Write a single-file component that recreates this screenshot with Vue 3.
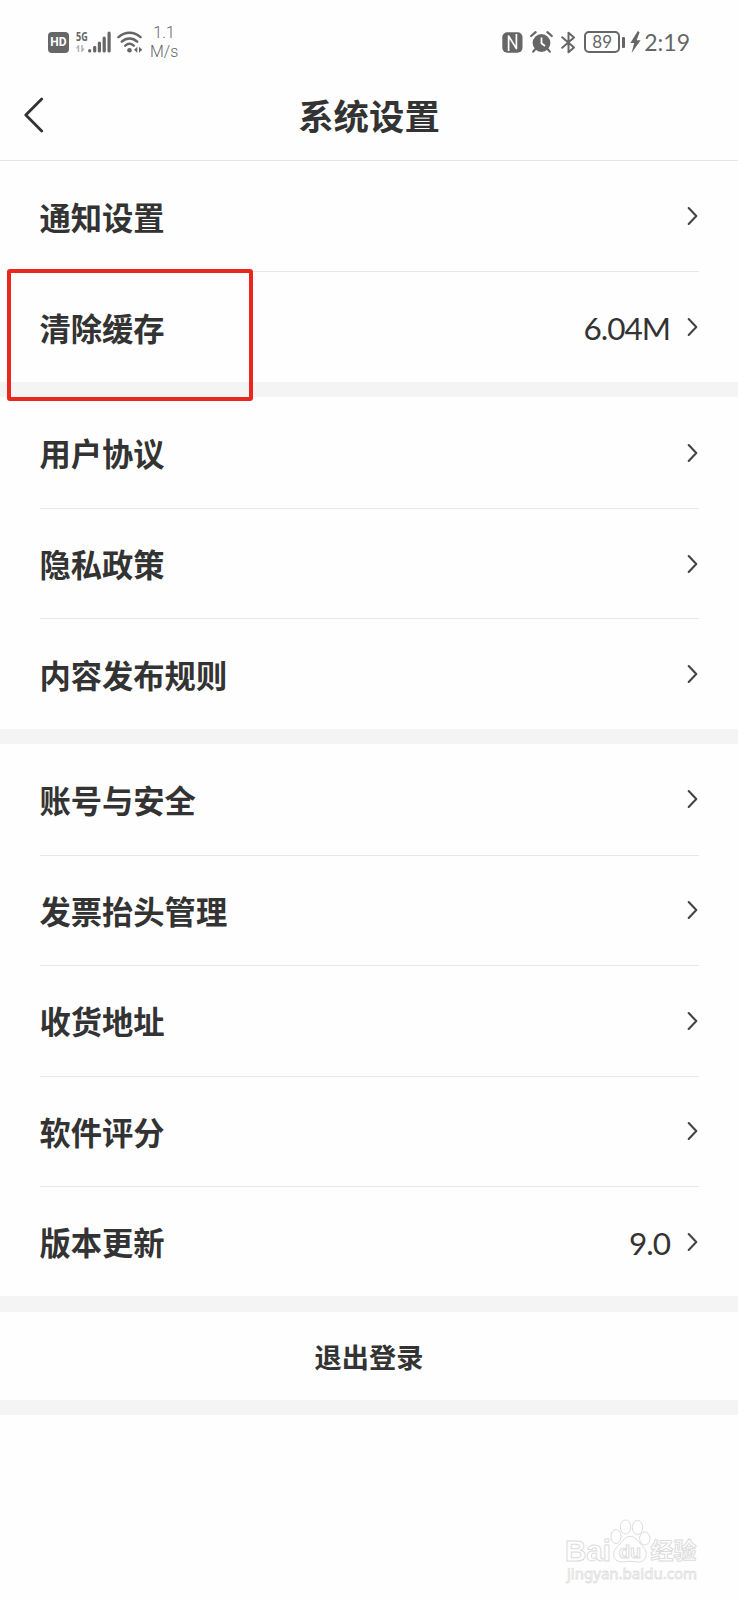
<template>
  <div class="page">
    <div class="status-bar">
      <div class="status-left">
        <div class="hd">HD</div>
        <div class="signal">
          <div class="net">
            <span class="net-type">5G</span>
            <svg width="10" height="7" viewBox="0 0 10 7">
              <path d="M2.5 7V1L0.6 3.4M6 0V6L8 3.6" fill="none" stroke="#b5b5b5" stroke-width="1.5" />
            </svg>
          </div>
          <svg width="23" height="22" viewBox="0 0 23 22">
            <g stroke="#666" stroke-width="3.2" stroke-linecap="round">
              <path d="M1.7 19.6V19.9M6.7 16.3V19.9M11.4 12V19.9M16.2 7.2V19.9M21.1 2.2V19.9" />
            </g>
          </svg>
        </div>
        <svg class="wifi" width="26" height="22" viewBox="0 0 26 22">
          <g fill="none" stroke="#666" stroke-width="2.5" stroke-linecap="round">
            <path d="M1.5 6.2C7.8 0.2 17.2 0.2 23.5 6.2" />
            <path d="M4.8 10.6C9.4 6.4 15.6 6.4 20.2 10.6" />
            <path d="M8.3 14.6C10.9 12.4 14.1 12.4 16.7 14.6" />
          </g>
          <circle cx="12.5" cy="19.2" r="2.3" fill="#666" />
          <path d="M17 18.8L20.3 15.8V21.8ZM25.3 18.8L22 15.8V21.8Z" fill="#666" />
        </svg>
        <div class="speed">
          <span>1.1</span>
          <span>M/s</span>
        </div>
      </div>
      <div class="status-right">
        <!-- NFC -->
        <svg width="21" height="21" viewBox="0 0 21 21">
          <rect x="0.3" y="0.3" width="20.2" height="20.4" rx="5" fill="#666" />
          <path d="M6.6 19V4L14.4 16.6V2" fill="none" stroke="#fff" stroke-width="1.7" stroke-linejoin="round" />
        </svg>
        <!-- 闹钟 -->
        <svg class="alarm" width="23" height="22" viewBox="0 0 23 22">
          <circle cx="11.5" cy="12" r="8.9" fill="#666" />
          <path d="M1.2 5L5.6 1.2M21.8 5L17.4 1.2M5 18.5L3.2 20.6M18 18.5L19.8 20.6" stroke="#666" stroke-width="2.2" stroke-linecap="round" />
          <path d="M11.5 6.5V12.3L15 15" fill="none" stroke="#fff" stroke-width="1.8" />
        </svg>
        <!-- 蓝牙 -->
        <svg class="bluetooth" width="15" height="23" viewBox="0 0 15 23">
          <path d="M1.2 6.3L13 16.4L7.5 21.3V1.7L13 6.5L1.2 16.8" fill="none" stroke="#666" stroke-width="2" stroke-linejoin="round" stroke-linecap="round" />
        </svg>
        <div class="battery">
          <span class="battery-level">89</span>
          <span class="battery-cap"></span>
        </div>
        <svg class="bolt" width="11" height="22" viewBox="0 0 11 22">
          <path d="M7.8 0L0.4 12H4.2L1.6 22L10.6 9.2H6.6L9.6 1.2Z" fill="#666" />
        </svg>
        <span class="time">2:19</span>
      </div>
    </div>

    <div class="nav-bar">
      <svg class="back" width="20" height="36" viewBox="0 0 20 36">
        <path d="M17.7 1.9L1.8 17.9L17.7 34" fill="none" stroke="#333" stroke-width="2.8" stroke-linecap="round" stroke-linejoin="round" />
      </svg>
      <h1 class="title">系统设置</h1>
    </div>

    <template v-for="(group, index) in groups" :key="index">
      <div class="group">
        <div v-for="item in group" :key="item.label" class="row">
          <span class="label">{{ item.label }}</span>
          <span v-if="item.value" class="value">{{ item.value }}</span>
          <svg class="arrow" width="11" height="20" viewBox="0 0 11 20">
            <path d="M1.7 2.1L9.3 10L1.7 17.9" fill="none" stroke="#444" stroke-width="2.1" stroke-linecap="round" stroke-linejoin="round" />
          </svg>
          <div v-if="item.marked" class="mark"></div>
        </div>
      </div>
      <div class="divider"></div>
    </template>

    <div class="logout">退出登录</div>
    <div class="divider"></div>

    <svg class="watermark" width="140" height="66" viewBox="0 0 140 66">
      <g fill="#fff" stroke="#dcdcdc" stroke-width="1">
        <text class="wm-bold" x="5" y="43" font-size="30" textLength="46" lengthAdjust="spacingAndGlyphs">Bai</text>
        <ellipse cx="56" cy="18.5" rx="5" ry="7" />
        <ellipse cx="65.5" cy="9" rx="5.2" ry="7" />
        <ellipse cx="77.5" cy="9.5" rx="5.2" ry="7" />
        <ellipse cx="84.8" cy="20.5" rx="5.2" ry="6.5" />
        <path d="M70 18.5C75.5 18.5 77.5 22.5 80.5 26C84.5 30 87 33 86 38C85 43 80.5 44.5 76 43.8C72 43.2 68 43.2 64 43.8C58.5 44.5 54.5 42 53.8 37.5C53.2 32.5 56.5 29.5 60 26C63 22.5 65 18.5 70 18.5Z" />
        <text class="wm-bold" x="59" y="40" font-size="18" textLength="22" lengthAdjust="spacingAndGlyphs">du</text>
        <text class="wm-cjk" x="90.5" y="41" font-size="23" textLength="46">经验</text>
      </g>
      <text class="wm-url" x="7" y="60.5" font-size="15" textLength="130" lengthAdjust="spacingAndGlyphs" fill="#fff" stroke="#dedede" stroke-width="0.8">jingyan.baidu.com</text>
    </svg>
  </div>
</template>

<script setup>
const groups = [
  [
    { label: '通知设置' },
    { label: '清除缓存', value: '6.04M', marked: true }
  ],
  [
    { label: '用户协议' },
    { label: '隐私政策' },
    { label: '内容发布规则' }
  ],
  [
    { label: '账号与安全' },
    { label: '发票抬头管理' },
    { label: '收货地址' },
    { label: '软件评分' },
    { label: '版本更新', value: '9.0' }
  ]
]
</script>

<style>
body {
  margin: 0;
  background: #fefefe;
}
</style>

<style scoped>
.page {
  position: relative;
  box-sizing: border-box;
  width: 738px;
  height: 1600px;
  overflow: hidden;
  background: #fefefe;
  color: #333;
  font-family: Lato, 'Noto Sans CJK SC', sans-serif;
}

.status-bar {
  display: flex;
  justify-content: space-between;
  box-sizing: border-box;
  height: 70px;
  padding: 0 48px;
  color: #666;
}

.status-left,
.status-right {
  display: flex;
  align-items: center;
  height: 84px;
}

.hd {
  width: 21px;
  height: 21px;
  border-radius: 4px;
  background: #666;
  color: #fff;
  font: 700 12px/21px Roboto, sans-serif;
  text-align: center;
}

.signal {
  display: flex;
  margin-left: 7px;
}

.net {
  display: flex;
  flex-direction: column;
  width: 12px;
  height: 22px;
}

.net-type {
  height: 14px;
  font: 700 12px/11px 'Open Sans', sans-serif;
  transform: scaleX(0.75);
  transform-origin: left;
}

.wifi {
  margin-left: 6px;
}

.speed {
  display: flex;
  flex-direction: column;
  align-items: center;
  margin-left: 7px;
  font: 300 16px/19px Roboto, sans-serif;
}

.alarm {
  margin-left: 7px;
}

.bluetooth {
  margin-left: 8px;
}

.battery {
  display: flex;
  align-items: center;
  margin-left: 8px;
}

.battery-level {
  box-sizing: border-box;
  width: 36px;
  height: 22px;
  border: 2px solid #666;
  border-radius: 5px;
  font-size: 17px;
  line-height: 18px;
  text-align: center;
}

.battery-cap {
  width: 3px;
  height: 11px;
  margin-left: 2px;
  border-radius: 1px;
  background: #666;
}

.bolt {
  margin-left: 5px;
}

.time {
  margin-left: 3px;
  font-size: 23px;
}

.nav-bar {
  display: grid;
  grid-template-columns: 100px 1fr 100px;
  align-items: center;
  box-sizing: border-box;
  height: 91px;
  border-bottom: 1px solid #e4e4e4;
}

.back {
  margin-left: 24px;
}

.title {
  margin: 0;
  padding-top: 3px;
  font-size: 35.4px;
  font-weight: 700;
  line-height: 50px;
  text-align: center;
}

.row {
  position: relative;
  display: flex;
  align-items: center;
  box-sizing: border-box;
  height: 110.48px;
  margin: 0 39px 0 40px;
}

.row + .row {
  border-top: 1px solid #e8e8e8;
}

.divider {
  height: 15.4px;
  background: #f4f4f4;
}

.label {
  flex: 1;
  margin-left: -0.6px;
  padding-top: 3px;
  font-size: 31.3px;
  font-weight: 700;
  line-height: 44px;
}

.value {
  margin-right: 17px;
  padding-top: 2px;
  font-size: 31.5px;
  letter-spacing: -1px;
}

.arrow {
  margin-right: 1px;
}

/* 红色标注框 */
.mark {
  position: absolute;
  top: -3px;
  left: -33px;
  box-sizing: border-box;
  width: 246px;
  height: 132px;
  border: 4px solid #ea261d;
  border-radius: 3px;
  z-index: 1;
}

.logout {
  height: 88px;
  padding-top: 2px;
  box-sizing: border-box;
  font-size: 27.2px;
  font-weight: 700;
  line-height: 88px;
  text-align: center;
}

.watermark {
  position: absolute;
  left: 560px;
  top: 1518px;
}

.wm-bold {
  font-family: 'Liberation Sans', sans-serif;
  font-weight: 700;
}

.wm-cjk {
  font-family: 'Noto Sans CJK SC', sans-serif;
  font-weight: 700;
}

.wm-url {
  font-family: 'Noto Sans', sans-serif;
}
</style>
